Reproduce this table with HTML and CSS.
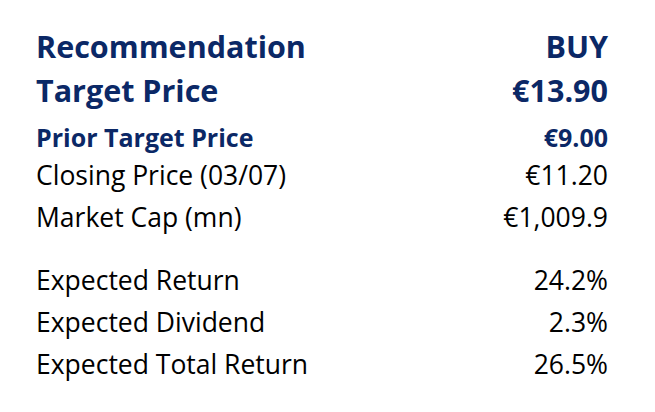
FILE: index.html
```html
<!DOCTYPE html>
<html lang="en">
<head>
<meta charset="utf-8">
<title>Recommendation</title>
<link rel="stylesheet" href="styles.css">
</head>
<body>
<div class="sheet">
  <div class="row big"><span>Recommendation</span><span>BUY</span></div>
  <div class="row big"><span>Target Price</span><span>€13.90</span></div>
  <div class="row mid"><span>Prior Target Price</span><span>€9.00</span></div>
  <div class="row reg"><span>Closing Price (03/07)</span><span>€11.20</span></div>
  <div class="row reg"><span>Market Cap (mn)</span><span>€1,009.9</span></div>
  <div class="group">
    <div class="row reg"><span>Expected Return</span><span>24.2%</span></div>
    <div class="row reg"><span>Expected Dividend</span><span>2.3%</span></div>
    <div class="row reg"><span>Expected Total Return</span><span>26.5%</span></div>
  </div>
</div>
</body>
</html>
```
FILE: styles.css
```css
html, body {
  margin: 0;
  padding: 0;
  background: #ffffff;
}
.sheet {
  font-family: "Open Sans", Lato, sans-serif;
  width: 572px;
  padding: 24px 0 0 36px;
  color: #000;
}
.row {
  display: flex;
  justify-content: space-between;
  align-items: baseline;
  white-space: nowrap;
}
.big {
  font-weight: 700;
  font-size: 30.5px;
  line-height: 44px;
  color: #0b2866;
}
.mid {
  font-weight: 700;
  font-size: 25px;
  line-height: 33px;
  margin-top: 9px;
  color: #0b2866;
}
.reg {
  font-size: 26.5px;
  line-height: 42px;
}
.group {
  margin-top: 21px;
}
```
